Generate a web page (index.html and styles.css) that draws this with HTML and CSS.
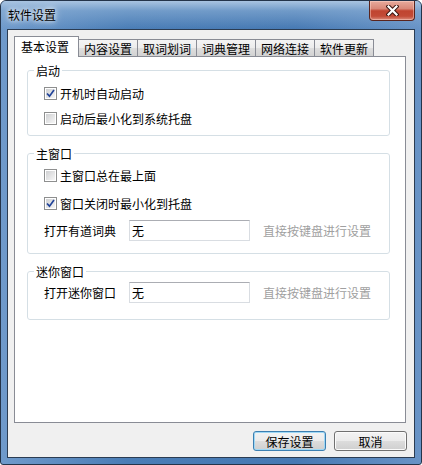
FILE: index.html
```html
<!DOCTYPE html>
<html lang="zh-CN">
<head>
  <meta charset="UTF-8">
  <title>软件设置</title>
  <link rel="stylesheet" href="styles.css">
</head>
<body>
<div class="window">
  <div class="titlebar">
    <span class="title">软件设置</span>
    <button class="close" title="关闭">
      <svg width="13" height="11" viewBox="0 0 13 11">
        <path d="M2.5 1.5 L10.5 9.5 M10.5 1.5 L2.5 9.5" stroke="#3b1712" stroke-width="4.2" stroke-linecap="square"/>
        <path d="M2.5 1.5 L10.5 9.5 M10.5 1.5 L2.5 9.5" stroke="#fff" stroke-width="2.2" stroke-linecap="square"/>
      </svg>
    </button>
  </div>

  <div class="frame">
    <div class="client">
      <ul class="tabs">
        <li class="tab active">基本设置</li>
        <li class="tab">内容设置</li>
        <li class="tab">取词划词</li>
        <li class="tab">词典管理</li>
        <li class="tab">网络连接</li>
        <li class="tab">软件更新</li>
      </ul>

      <div class="panel">
        <!-- 启动 -->
        <fieldset class="group g-start">
          <legend>启动</legend>
          <label class="check"><span class="box"><svg width="9" height="9" viewBox="0 0 9 9"><path d="M1 4.5 L3.5 7.2 L8 1" fill="none" stroke="#22449a" stroke-width="1.7"/></svg></span>开机时自动启动</label>
          <label class="check gap5"><span class="box"></span>启动后最小化到系统托盘</label>
        </fieldset>

        <!-- 主窗口 -->
        <fieldset class="group g-main">
          <legend>主窗口</legend>
          <label class="check"><span class="box"></span>主窗口总在最上面</label>
          <label class="check gap8"><span class="box"><svg width="9" height="9" viewBox="0 0 9 9"><path d="M1 4.5 L3.5 7.2 L8 1" fill="none" stroke="#22449a" stroke-width="1.7"/></svg></span>窗口关闭时最小化到托盘</label>
          <div class="hotkey gap7">
            <span class="name">打开有道词典</span>
            <input type="text" value="无">
            <span class="hint">直接按键盘进行设置</span>
          </div>
        </fieldset>

        <!-- 迷你窗口 -->
        <fieldset class="group g-mini">
          <legend>迷你窗口</legend>
          <div class="hotkey">
            <span class="name">打开迷你窗口</span>
            <input type="text" value="无">
            <span class="hint">直接按键盘进行设置</span>
          </div>
        </fieldset>
      </div>

      <div class="actions">
        <button class="btn default">保存设置</button>
        <button class="btn">取消</button>
      </div>
    </div>
  </div>
</div>
</body>
</html>
```

FILE: styles.css
```css
* { box-sizing: border-box; }
body { margin: 0; background: #fff; font-family: "Noto Sans CJK SC", "Noto Sans", sans-serif; font-size: 12px; color: #000; }

/* window frame */
.window { width: 422px; height: 465px; display: flex; flex-direction: column; border: 1px solid #24344a; border-radius: 6px 6px 3px 3px; overflow: hidden;
  background: linear-gradient(90deg, #6f9acb 0%, #4a7db6 30%, #4679b3 70%, #6893c6 100%); }
.titlebar { height: 28px; flex: none; display: flex; align-items: flex-start; padding: 0 6px 0 7px;
  background: linear-gradient(#a9c4e1 0%, rgba(140,176,214,.6) 35%, rgba(90,140,196,0) 100%); }
.title { margin-top: 7px; line-height: 14px; text-shadow: 0 0 4px #fff, 0 0 8px #fff; }
.close { margin-left: auto; width: 46px; height: 20px; padding: 0; display: flex; align-items: center; justify-content: center;
  border: 1px solid #5a241d; border-top: none; border-radius: 0 0 4px 4px;
  background: linear-gradient(#e8ab9d 0%, #d98878 40%, #c04430 52%, #c24b37 80%, #dc8c7c 100%);
  box-shadow: inset 0 0 0 1px rgba(255,220,210,.45); }
.frame { flex: 1; padding: 0 6px 6px; }
.client { height: 100%; border: 1px solid #2b3c52; background: #f0f0f0; padding: 6px 6px 0; }

/* tabs */
.tabs { display: flex; align-items: flex-end; height: 20px; margin: 0; padding: 0; list-style: none; }
.tab { height: 17px; margin-left: -1px; padding: 3px 5px 0; line-height: 12px; border: 1px solid #898c95; border-bottom: none;
  background: linear-gradient(#f4f4f4 0%, #ececec 50%, #dedede 50%, #d2d2d2 100%); white-space: nowrap; }
.tab.active { position: relative; height: 21px; margin: 0 0 -1px; padding: 3px 9px 0 6px; line-height: 14px; background: #fff; }

.panel { width: 392px; height: 367px; background: #fff; border: 1px solid #898c95; padding-left: 12px; }

/* group boxes */
.group { width: 363px; margin: 10px 0 0; padding: 0 0 0 16px; border: 1px solid #d5dfe5; border-radius: 3px; }
.group legend { margin-left: -10px; padding: 0 2px; line-height: 15px; }
.g-start { margin-top: 6px; padding-top: 5px; padding-bottom: 7px; }
.g-main { padding-top: 4px; padding-bottom: 12px; }
.g-mini { padding-top: 3px; padding-bottom: 16px; }

.check { display: flex; align-items: center; height: 20px; gap: 3px; }
.gap5 { margin-top: 5px; }
.gap7 { margin-top: 7px; }
.gap8 { margin-top: 8px; }
.box { width: 13px; height: 13px; flex: none; display: flex; align-items: center; justify-content: center; border: 1px solid #8e8f8f; padding: 1px;
  background: linear-gradient(135deg, #cfd0d2, #f6f6f6) content-box, #fff; }

.hotkey { display: flex; align-items: center; height: 21px; }
.hotkey .name { width: 85px; flex: none; }
.hotkey input { width: 121px; height: 21px; margin: 0; padding: 0 2px; font: inherit; color: #000; outline: none;
  border: 1px solid #d9dde2; border-top-color: #abadb3; }
.hint { margin-left: 13px; color: #a0a0a0; }

/* bottom buttons */
.actions { display: flex; justify-content: flex-end; gap: 8px; margin: 8px 1px 0 0; }
.btn { width: 73px; height: 20px; padding: 0; font: inherit; color: #000; border: 1px solid #707070; border-radius: 3px;
  background: linear-gradient(#f3f3f3 0%, #ebebeb 50%, #dddddd 50%, #cfcfcf 100%); box-shadow: inset 0 0 0 1px #fbfbfb; }
.btn.default { border-color: #3c7fb1; box-shadow: inset 0 0 0 1px #9fd8f5; }
```
